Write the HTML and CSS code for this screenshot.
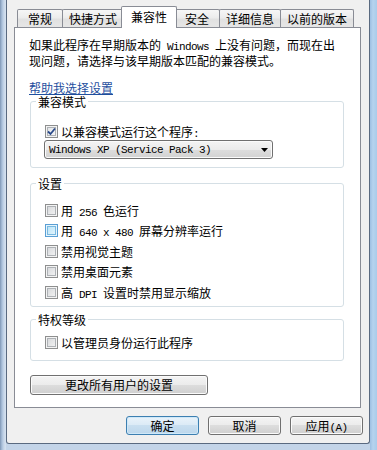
FILE: index.html
```html
<!DOCTYPE html>
<html>
<head>
<meta charset="utf-8">
<link rel="stylesheet" href="styles.css">
</head>
<body>
<div class="window">
  <div class="dialog">
    <div class="tabs">
      <div class="tab">常规</div>
      <div class="tab">快捷方式</div>
      <div class="tab active">兼容性</div>
      <div class="tab">安全</div>
      <div class="tab">详细信息</div>
      <div class="tab">以前的版本</div>
    </div>
    <div class="panel">
      <p class="intro">如果此程序在早期版本的<span class="lat"> Windows </span>上没有问题，而现在出<br>现问题，请选择与该早期版本匹配的兼容模式。</p>
      <a class="link">帮助我选择设置</a>
      <fieldset class="group g1">
        <legend>兼容模式</legend>
        <div class="check"><span class="box checked"><svg width="9" height="9" viewBox="0 0 9 9"><path d="M1 4.5L3.5 7L8 1.5" fill="none" stroke="#2a4a8a" stroke-width="1.8"/></svg></span><span>以兼容模式运行这个程序<span class="lat">:</span></span></div>
        <div class="combo"><span class="lat">Windows XP (Service Pack 3)</span><svg width="7" height="4" viewBox="0 0 7 4"><path d="M0 0H7L3.5 4Z" fill="#000"/></svg></div>
      </fieldset>
      <fieldset class="group g2">
        <legend>设置</legend>
        <div class="check row"><span class="box"></span><span>用<span class="lat"> 256 </span>色运行</span></div>
        <div class="check row"><span class="box hot"></span><span>用<span class="lat"> 640 x 480 </span>屏幕分辨率运行</span></div>
        <div class="check row"><span class="box"></span><span>禁用视觉主题</span></div>
        <div class="check row"><span class="box"></span><span>禁用桌面元素</span></div>
        <div class="check row"><span class="box"></span><span>高<span class="lat"> DPI </span>设置时禁用显示缩放</span></div>
      </fieldset>
      <fieldset class="group g3">
        <legend>特权等级</legend>
        <div class="check row"><span class="box"></span><span>以管理员身份运行此程序</span></div>
      </fieldset>
      <button class="btn wide">更改所有用户的设置</button>
    </div>
    <div class="buttons">
      <button class="btn default">确定</button>
      <button class="btn">取消</button>
      <button class="btn">应用<span class="lat">(A)</span></button>
    </div>
  </div>
</div>
</body>
</html>
```
FILE: styles.css
```css
* { box-sizing: border-box; }
html, body { margin: 0; padding: 0; }
body {
  width: 377px;
  height: 450px;
  overflow: hidden;
  font-family: "Noto Sans CJK SC", sans-serif;
  font-size: 12px;
  color: #000;
}
.lat {
  font-family: "Liberation Mono", monospace;
  font-size: 11px;
  letter-spacing: -0.6px;
}
.window {
  height: 450px;
  padding: 0 7px 6px 6px;
  background:
    linear-gradient(to right, #7f97b5 0, #aac0da 2px, #c9d8ea 4px, #d6e2ef 6px, rgba(0,0,0,0) 6px, rgba(0,0,0,0) 370px, #9dbfe2 370px, #b6d3ee 373px, #a9cbe9 377px),
    linear-gradient(#cfdcea, #c3d4e8);
}
.dialog {
  height: 444px;
  border: 1px solid #5a6a80;
  border-top: none;
  border-radius: 0 0 3px 3px;
  background: #f0f0f0;
  padding: 0 8px 0 7px;
  display: flex;
  flex-direction: column;
}
.tabs {
  display: flex;
  align-items: flex-end;
  height: 22px;
  margin-top: 6px;
  margin-bottom: -1px;
  padding-left: 3px;
  position: relative;
  z-index: 1;
}
.tab {
  height: 18px;
  margin-bottom: 1px;
  border: 1px solid #898c95;
  border-bottom: none;
  border-radius: 2px 2px 0 0;
  padding: 0 6px;
  min-width: 46px;
  text-align: center;
  line-height: 18px;
  white-space: nowrap;
  background: linear-gradient(#f6f6f6, #ececec 45%, #e1e1e1 55%, #e6e6e6);
}
.tab + .tab { margin-left: -1px; }
.tab.active {
  height: 22px;
  margin: 0 -2px 0 -3px;
  padding: 0 9px;
  line-height: 20px;
  background: #fff;
  position: relative;
  z-index: 2;
}
.tab.active + .tab { margin-left: -1px; }
.panel {
  flex: none;
  height: 381px;
  border: 1px solid #898c95;
  background: #fff;
  padding: 10px 16px 0 14px;
  display: flex;
  flex-direction: column;
  align-items: flex-start;
}
.intro {
  margin: 0;
  line-height: 13px;
  white-space: nowrap;
}
.link {
  display: block;
  margin-top: 14px;
  line-height: 13px;
  color: #1f4f9e;
  text-decoration: underline;
  text-underline-offset: 1px;
}
.group {
  align-self: stretch;
  border: 1px solid #d5dfe5;
  border-radius: 3px;
  margin: 1px 0 0 1px;
  padding: 16px 8px 8px 5px;
  min-width: 0;
}
.group legend {
  padding: 0 2px;
  line-height: 13px;
}
.check {
  display: flex;
  align-items: center;
  height: 15px;
  margin-left: 9px;
  gap: 3px;
  white-space: nowrap;
}
.row { height: 20.5px; }
.box {
  flex: none;
  width: 13px;
  height: 13px;
  border: 1px solid #8e8f8f;
  background: linear-gradient(135deg, #d2d4d7, #f7f7f7);
  box-shadow: inset 0 0 0 1px #f4f4f4, inset 0 0 0 2px #aeb2b6;
  display: flex;
  align-items: center;
  justify-content: center;
}
.box.checked {
  background: linear-gradient(135deg, #dfe2e6, #f9f9f9);
}
.box.hot {
  border-color: #5a9fd4;
  background: linear-gradient(135deg, #b4e1f7, #eaf7fd);
  box-shadow: inset 0 0 0 1px #e6f5fd, inset 0 0 0 2px #79b9e0;
}
.combo {
  margin: 1px 0 0 8px;
  width: 229px;
  height: 19px;
  border: 1px solid #707070;
  border-radius: 3px;
  background: linear-gradient(#f4f4f4, #ebebeb 50%, #dddddd 50%, #d2d2d2);
  box-shadow: inset 0 0 0 1px #fbfbfb;
  display: flex;
  align-items: center;
  justify-content: space-between;
  padding: 0 4px 0 4px;
  white-space: nowrap;
}
.g2 {
  margin-top: 9px;
  padding-top: 10px;
  padding-bottom: 3px;
}
.g3 {
  margin-top: 6px;
  padding-top: 7px;
  padding-bottom: 7px;
}
.btn {
  font-family: inherit;
  font-size: 12px;
  color: #000;
  height: 19px;
  width: 73px;
  padding: 0;
  border: 1px solid #707070;
  border-radius: 3px;
  background: linear-gradient(#f4f4f4, #ebebeb 50%, #dddddd 50%, #cfcfcf);
  box-shadow: inset 0 0 0 1px #fbfbfb;
  line-height: 17px;
  text-align: center;
}
.btn.wide {
  width: 178px;
  height: 20px;
  margin: 14px 0 0 1px;
  line-height: 18px;
}
.btn.default {
  border-color: #3c7fb1;
  background: linear-gradient(#e9f3fa, #dbeaf6 50%, #c9dff0 50%, #bcd7ec);
  box-shadow: inset 0 0 0 1px #cfe8f8;
}
.buttons {
  display: flex;
  justify-content: flex-end;
  gap: 9px;
  margin: 8px -2px 0 0;
}
```
